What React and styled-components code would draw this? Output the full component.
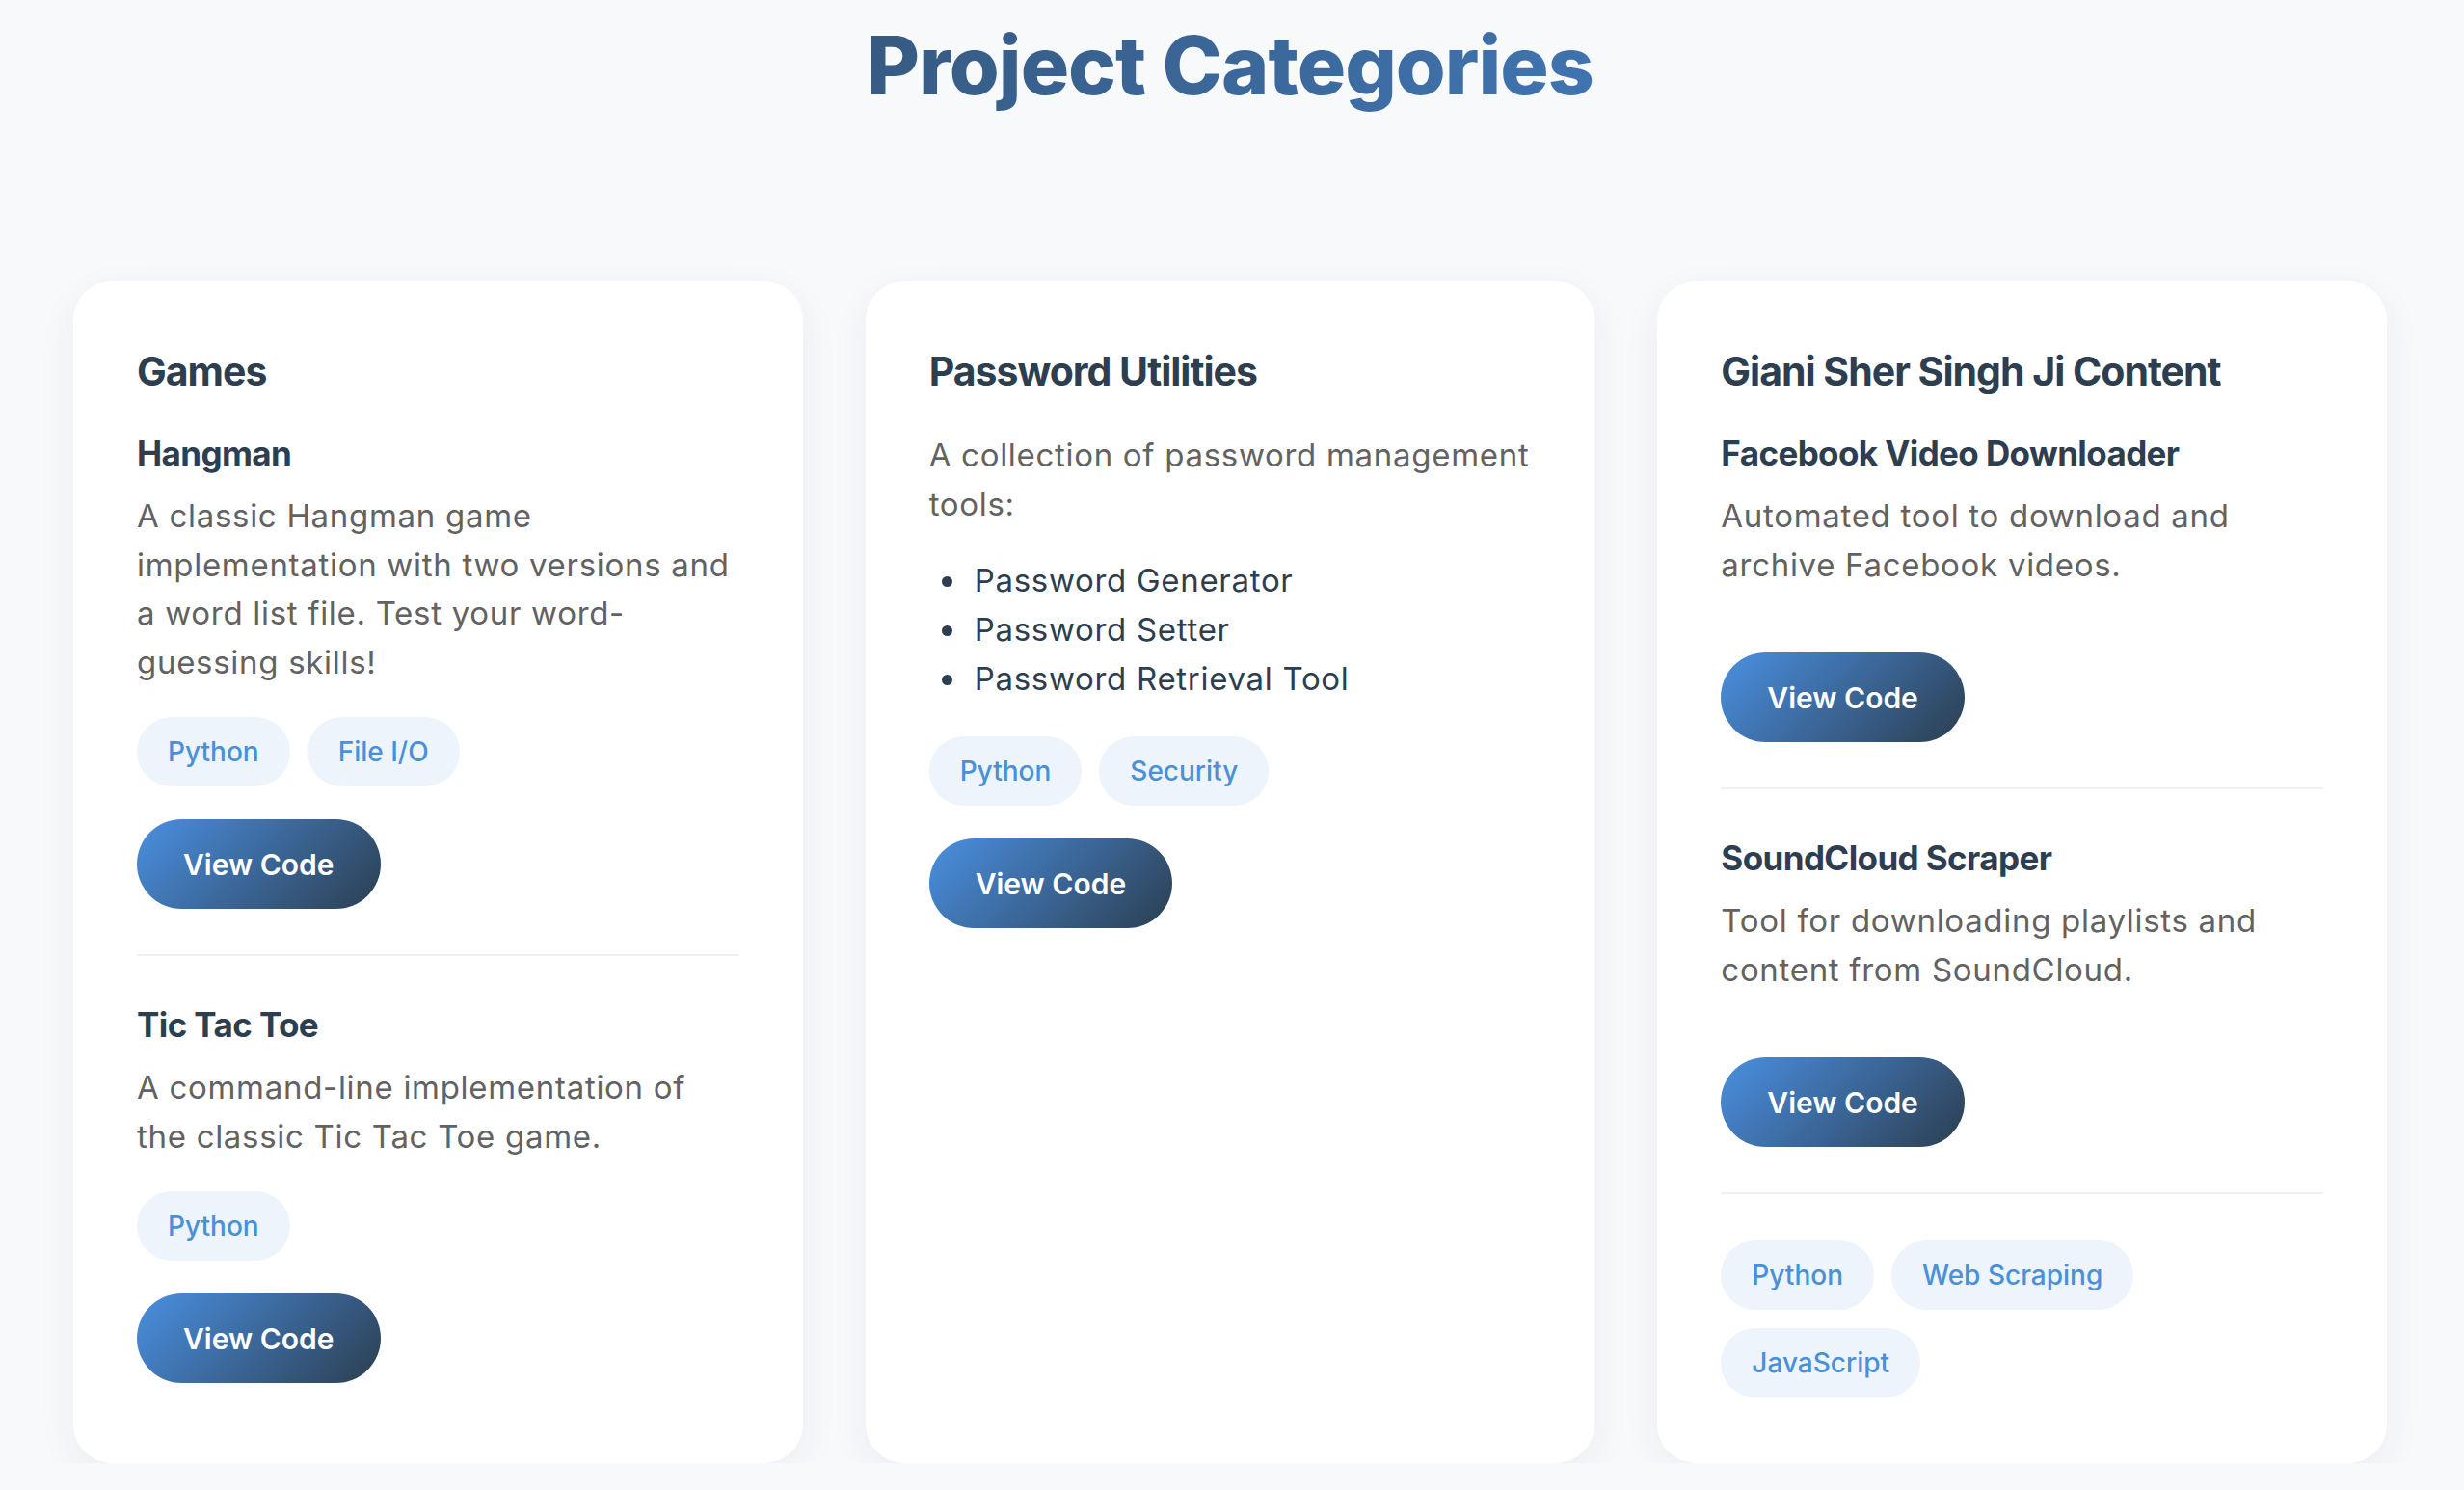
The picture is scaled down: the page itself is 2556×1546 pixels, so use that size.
import React from "react";
import styled, { createGlobalStyle } from "styled-components";

const GlobalStyle = createGlobalStyle`
  * {
    box-sizing: border-box;
  }
  body {
    margin: 0;
    background: #f8f9fb;
    font-family: Inter, "Noto Sans", sans-serif;
    color: #2c3e50;
  }
`;

const Page = styled.main`
  padding: 19px 80px 0 76px;
`;

const Title = styled.h1`
  margin: 0 0 175px;
  text-align: center;
  font-size: 84px;
  line-height: 98px;
  font-weight: 800;
  letter-spacing: -1px;
  background: linear-gradient(135deg, #2c3e50, #4a90e2);
  -webkit-background-clip: text;
  background-clip: text;
  color: transparent;
`;

const Grid = styled.section`
  display: grid;
  grid-template-columns: repeat(3, 1fr);
  gap: 65px;
  align-items: stretch;
`;

const Card = styled.article`
  background: #ffffff;
  border-radius: 40px;
  padding: 66px 66px 68px;
  box-shadow: 0 12px 40px rgba(30, 50, 80, 0.06);
`;

const CategoryTitle = styled.h2`
  margin: 0 0 35px;
  font-size: 41px;
  line-height: 54px;
  font-weight: 700;
  letter-spacing: -1px;
  color: #2c3e50;
`;

const Project = styled.div`
  display: flex;
  flex-direction: column;
  align-items: flex-start;
  padding-bottom: ${(p) => (p.$divider ? "47px" : "0")};
  margin-bottom: ${(p) => (p.$divider ? "48px" : "0")};
  border-bottom: ${(p) => (p.$divider ? "2px solid #eef0f3" : "none")};
`;

const ProjectTitle = styled.h3`
  margin: 0 0 17px;
  font-size: 35px;
  line-height: 46px;
  font-weight: 700;
  letter-spacing: -0.6px;
  color: #2c3e50;
`;

const Desc = styled.p`
  margin: 0 0 32px;
  font-size: 33px;
  line-height: 50.5px;
  letter-spacing: 0.7px;
  color: #626262;
`;

const List = styled.ul`
  margin: -3px 0 34px;
  padding: 0;
  list-style: none;
  font-size: 33px;
  line-height: 51px;
  letter-spacing: 0.7px;
  color: #2c3e50;
`;

const ListItem = styled.li`
  display: flex;
  align-items: center;

  &::before {
    content: "";
    flex: none;
    width: 11px;
    height: 11px;
    margin: 2px 23px 0 13px;
    border-radius: 50%;
    background: #2c3e50;
  }
`;

const TagRow = styled.div`
  display: flex;
  flex-wrap: wrap;
  gap: 19px 18px;
  margin-bottom: ${(p) => (p.$last ? "0" : "34px")};
`;

const Tag = styled.span`
  display: inline-block;
  padding: 13px 32px;
  line-height: 46px;
  font-size: 28px;
  font-weight: 500;
  color: #4a90d9;
  background: #edf4fb;
  border-radius: 999px;
`;

const Button = styled.a`
  display: inline-flex;
  align-items: center;
  justify-content: center;
  height: 93px;
  padding: 0 48px;
  border-radius: 999px;
  background: linear-gradient(135deg, #4a90e2, #2c3e50);
  color: #ffffff;
  font-size: 30px;
  font-weight: 600;
  text-decoration: none;
  cursor: pointer;
`;

const categories = [
  {
    title: "Games",
    projects: [
      {
        title: "Hangman",
        desc: "A classic Hangman game implementation with two versions and a word list file. Test your word-guessing skills!",
        tags: ["Python", "File I/O"],
      },
      {
        title: "Tic Tac Toe",
        desc: "A command-line implementation of the classic Tic Tac Toe game.",
        tags: ["Python"],
      },
    ],
  },
  {
    title: "Password Utilities",
    projects: [
      {
        desc: "A collection of password management tools:",
        list: ["Password Generator", "Password Setter", "Password Retrieval Tool"],
        tags: ["Python", "Security"],
      },
    ],
  },
  {
    title: "Giani Sher Singh Ji Content",
    divided: true,
    projects: [
      {
        title: "Facebook Video Downloader",
        desc: "Automated tool to download and archive Facebook videos.",
        tags: [],
      },
      {
        title: "SoundCloud Scraper",
        desc: "Tool for downloading playlists and content from SoundCloud.",
        tags: [],
      },
    ],
    tags: ["Python", "Web Scraping", "JavaScript"],
  },
];

const ProjectItem = ({ project, divider }) => (
  <Project $divider={divider}>
    {project.title && <ProjectTitle>{project.title}</ProjectTitle>}
    <Desc>{project.desc}</Desc>
    {project.list && (
      <List>
        {project.list.map((item) => (
          <ListItem key={item}>{item}</ListItem>
        ))}
      </List>
    )}
    <TagRow>
      {project.tags.map((tag) => (
        <Tag key={tag}>{tag}</Tag>
      ))}
    </TagRow>
    <Button>View Code</Button>
  </Project>
);

const App = () => {
  return (
    <Page>
      <GlobalStyle />
      <Title>Project Categories</Title>
      <Grid>
        {categories.map((cat) => (
          <Card key={cat.title}>
            <CategoryTitle>{cat.title}</CategoryTitle>
            {cat.projects.map((project, i) => (
              <ProjectItem
                key={i}
                project={project}
                divider={cat.divided || i < cat.projects.length - 1}
              />
            ))}
            {cat.tags && (
              <TagRow $last>
                {cat.tags.map((tag) => (
                  <Tag key={tag}>{tag}</Tag>
                ))}
              </TagRow>
            )}
          </Card>
        ))}
      </Grid>
    </Page>
  );
};

export default App;
